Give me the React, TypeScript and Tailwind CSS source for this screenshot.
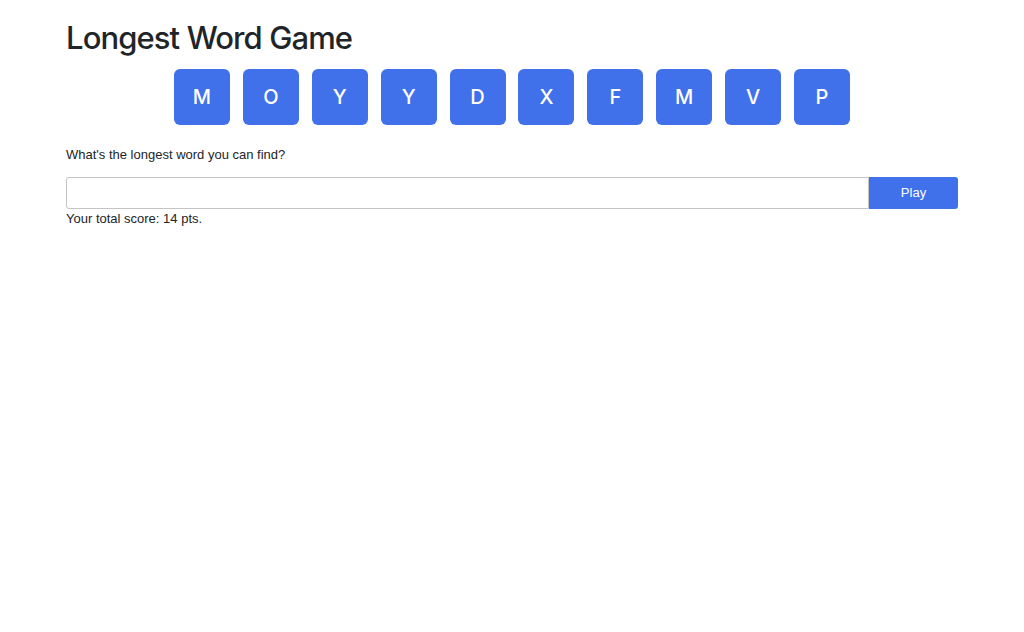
const letters = ["M", "O", "Y", "Y", "D", "X", "F", "M", "V", "P"];

export default function App() {
  return (
    <div className="min-h-screen bg-white text-[#212529] font-['Liberation_Sans',Arial,sans-serif]">
      <div className="mx-auto w-[916px] px-3">
        <h1 className="pt-[17px] font-['Inter',sans-serif] text-[31px] leading-[42px] font-medium tracking-[-0.9px]">
          Longest Word Game
        </h1>
        <div className="mt-[10px] flex justify-center gap-[12.9px]">
          {letters.map((l, i) => (
            <div
              key={i}
              className="w-14 h-14 rounded-md bg-[#4170eb] flex items-center justify-center text-white font-['Inter',sans-serif] text-[20px] font-medium"
            >
              {l}
            </div>
          ))}
        </div>
        <p className="mt-[20px] text-[13px] leading-5">What's the longest word you can find?</p>
        <form className="mt-[12px] flex" onSubmit={(e) => e.preventDefault()}>
          <input
            type="text"
            className="flex-1 h-8 border border-[#c4c4c4] rounded-l-[3px] px-2 text-[13px] outline-none"
          />
          <button className="w-[89px] h-8 bg-[#4170eb] text-white text-[13px] rounded-r-[3px]">Play</button>
        </form>
        <p className="text-[13px] leading-5">Your total score: 14 pts.</p>
      </div>
    </div>
  );
}
